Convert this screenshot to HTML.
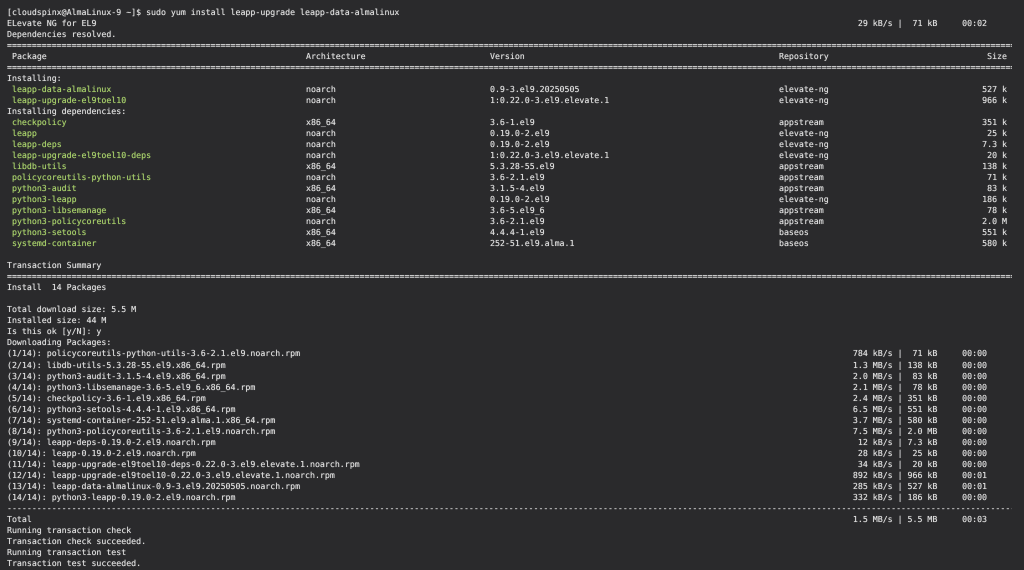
<!DOCTYPE html>
<html><head><meta charset="utf-8"><title>Terminal</title>
<style>
html,body{margin:0;padding:0;background:#2a2a2c}
body{width:1024px;height:570px;overflow:hidden;position:relative}
#t{position:absolute;left:7px;top:6.5px;width:1017px;font:8.26px/11.04px "DejaVu Sans Mono","Liberation Mono",monospace;color:#dcdcdc;filter:blur(.3px);text-rendering:geometricPrecision;text-shadow:0 0 .5px currentColor}
p{margin:0;height:11.04px;position:relative;white-space:pre}
b{font-weight:normal;color:#a6ce6a;position:absolute;left:5px;top:0}
i{font-style:normal;position:absolute;top:0}
.a{left:299px}.v{left:483px}.r{left:772px}
.s{right:17px}
.d{right:37px}
.h{left:5px}
.e{display:block;width:1005px;overflow:hidden}
</style></head><body>
<div id="t">
<p>[cloudspinx@AlmaLinux-9 ~]$ sudo yum install leapp-upgrade leapp-data-almalinux</p>
<p>ELevate NG for EL9<i class="d"> 29 kB/s |  71 kB     00:02</i></p>
<p>Dependencies resolved.</p>
<p><span class="e">==================================================================================================================================================================================================================</span></p>
<p><i class="h">Package</i><i class="a">Architecture</i><i class="v">Version</i><i class="r">Repository</i><i class="s">Size</i></p>
<p><span class="e">==================================================================================================================================================================================================================</span></p>
<p>Installing:</p>
<p><b>leapp-data-almalinux</b><i class="a">noarch</i><i class="v">0.9-3.el9.20250505</i><i class="r">elevate-ng</i><i class="s">527 k</i></p>
<p><b>leapp-upgrade-el9toel10</b><i class="a">noarch</i><i class="v">1:0.22.0-3.el9.elevate.1</i><i class="r">elevate-ng</i><i class="s">966 k</i></p>
<p>Installing dependencies:</p>
<p><b>checkpolicy</b><i class="a">x86_64</i><i class="v">3.6-1.el9</i><i class="r">appstream</i><i class="s">351 k</i></p>
<p><b>leapp</b><i class="a">noarch</i><i class="v">0.19.0-2.el9</i><i class="r">elevate-ng</i><i class="s">25 k</i></p>
<p><b>leapp-deps</b><i class="a">noarch</i><i class="v">0.19.0-2.el9</i><i class="r">elevate-ng</i><i class="s">7.3 k</i></p>
<p><b>leapp-upgrade-el9toel10-deps</b><i class="a">noarch</i><i class="v">1:0.22.0-3.el9.elevate.1</i><i class="r">elevate-ng</i><i class="s">20 k</i></p>
<p><b>libdb-utils</b><i class="a">x86_64</i><i class="v">5.3.28-55.el9</i><i class="r">appstream</i><i class="s">138 k</i></p>
<p><b>policycoreutils-python-utils</b><i class="a">noarch</i><i class="v">3.6-2.1.el9</i><i class="r">appstream</i><i class="s">71 k</i></p>
<p><b>python3-audit</b><i class="a">x86_64</i><i class="v">3.1.5-4.el9</i><i class="r">appstream</i><i class="s">83 k</i></p>
<p><b>python3-leapp</b><i class="a">noarch</i><i class="v">0.19.0-2.el9</i><i class="r">elevate-ng</i><i class="s">186 k</i></p>
<p><b>python3-libsemanage</b><i class="a">x86_64</i><i class="v">3.6-5.el9_6</i><i class="r">appstream</i><i class="s">78 k</i></p>
<p><b>python3-policycoreutils</b><i class="a">noarch</i><i class="v">3.6-2.1.el9</i><i class="r">appstream</i><i class="s">2.0 M</i></p>
<p><b>python3-setools</b><i class="a">x86_64</i><i class="v">4.4.4-1.el9</i><i class="r">baseos</i><i class="s">551 k</i></p>
<p><b>systemd-container</b><i class="a">x86_64</i><i class="v">252-51.el9.alma.1</i><i class="r">baseos</i><i class="s">580 k</i></p>
<p> </p>
<p>Transaction Summary</p>
<p><span class="e">==================================================================================================================================================================================================================</span></p>
<p>Install  14 Packages</p>
<p> </p>
<p>Total download size: 5.5 M</p>
<p>Installed size: 44 M</p>
<p>Is this ok [y/N]: y</p>
<p>Downloading Packages:</p>
<p>(1/14): policycoreutils-python-utils-3.6-2.1.el9.noarch.rpm<i class="d">784 kB/s |  71 kB     00:00</i></p>
<p>(2/14): libdb-utils-5.3.28-55.el9.x86_64.rpm<i class="d">1.3 MB/s | 138 kB     00:00</i></p>
<p>(3/14): python3-audit-3.1.5-4.el9.x86_64.rpm<i class="d">2.0 MB/s |  83 kB     00:00</i></p>
<p>(4/14): python3-libsemanage-3.6-5.el9_6.x86_64.rpm<i class="d">2.1 MB/s |  78 kB     00:00</i></p>
<p>(5/14): checkpolicy-3.6-1.el9.x86_64.rpm<i class="d">2.4 MB/s | 351 kB     00:00</i></p>
<p>(6/14): python3-setools-4.4.4-1.el9.x86_64.rpm<i class="d">6.5 MB/s | 551 kB     00:00</i></p>
<p>(7/14): systemd-container-252-51.el9.alma.1.x86_64.rpm<i class="d">3.7 MB/s | 580 kB     00:00</i></p>
<p>(8/14): python3-policycoreutils-3.6-2.1.el9.noarch.rpm<i class="d">7.5 MB/s | 2.0 MB     00:00</i></p>
<p>(9/14): leapp-deps-0.19.0-2.el9.noarch.rpm<i class="d"> 12 kB/s | 7.3 kB     00:00</i></p>
<p>(10/14): leapp-0.19.0-2.el9.noarch.rpm<i class="d"> 28 kB/s |  25 kB     00:00</i></p>
<p>(11/14): leapp-upgrade-el9toel10-deps-0.22.0-3.el9.elevate.1.noarch.rpm<i class="d"> 34 kB/s |  20 kB     00:00</i></p>
<p>(12/14): leapp-upgrade-el9toel10-0.22.0-3.el9.elevate.1.noarch.rpm<i class="d">892 kB/s | 966 kB     00:01</i></p>
<p>(13/14): leapp-data-almalinux-0.9-3.el9.20250505.noarch.rpm<i class="d">285 kB/s | 527 kB     00:01</i></p>
<p>(14/14): python3-leapp-0.19.0-2.el9.noarch.rpm<i class="d">332 kB/s | 186 kB     00:00</i></p>
<p><span class="e">------------------------------------------------------------------------------------------------------------------------------------------------------------------------------------------------------------------</span></p>
<p>Total<i class="d">1.5 MB/s | 5.5 MB     00:03</i></p>
<p>Running transaction check</p>
<p>Transaction check succeeded.</p>
<p>Running transaction test</p>
<p>Transaction test succeeded.</p>
</div>
</body></html>
